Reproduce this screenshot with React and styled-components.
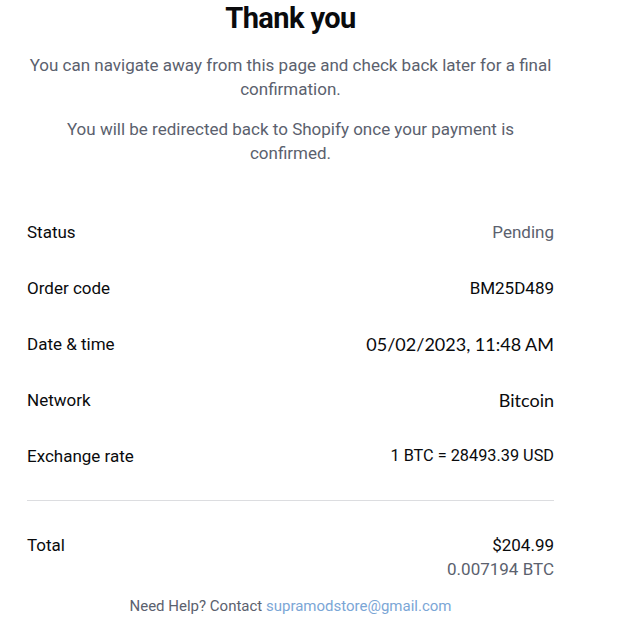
import React from 'react'
import styled, { createGlobalStyle } from 'styled-components'

const GlobalStyle = createGlobalStyle`
    body {
        margin: 0;
        background: #ffffff;
        font-family: Roboto, "Liberation Sans", sans-serif;
        color: #0a0b0d;
    }
`

const Page = styled.div`
    width: 527px;
    margin-left: 27px;
    display: flex;
    flex-direction: column;
`

const Title = styled.h1`
    margin: 0;
    font-size: 29px;
    font-weight: 700;
    line-height: 37px;
    letter-spacing: -0.6px;
    text-align: center;
`

const Note = styled.p`
    margin: ${({ top }) => top}px 0 0;
    font-size: 17px;
    line-height: 24px;
    color: #5b616e;
    text-align: center;
`

const Details = styled.div`
    margin-top: 39px;
    display: flex;
    flex-direction: column;
`

const Row = styled.div`
    display: flex;
    justify-content: space-between;
    align-items: center;
    height: 56px;
`

const Label = styled.span`
    font-size: 17px;
    line-height: 24px;
    color: #0a0b0d;
`

const Value = styled.span`
    font-size: ${({ size }) => size || 17}px;
    line-height: 24px;
    color: ${({ muted }) => muted ? '#5b616e' : '#0a0b0d'};
    font-family: ${({ alt }) => alt ? '"Lato", "Open Sans", sans-serif' : 'inherit'};
`

const Divider = styled.hr`
    margin: 16px 0 0;
    border: none;
    border-top: 1px solid #dcdde0;
`

const TotalRow = styled.div`
    margin-top: 32px;
    display: flex;
    justify-content: space-between;
    align-items: flex-start;
`

const Amounts = styled.div`
    display: flex;
    flex-direction: column;
    align-items: flex-end;
`

const Help = styled.p`
    margin: 16px 0 0;
    text-align: center;
    font-size: 15px;
    color: #5b616e;
`

const Mail = styled.a`
    color: #7ba6d6;
    text-decoration: none;
`

const rows = [
    { label: 'Status', value: 'Pending', muted: true },
    { label: 'Order code', value: 'BM25D489' },
    { label: 'Date & time', value: '05/02/2023, 11:48 AM', alt: true, size: 18 },
    { label: 'Network', value: 'Bitcoin', alt: true, size: 18 },
    { label: 'Exchange rate', value: '1 BTC = 28493.39 USD', size: 16.3 },
]

const App = () => (
    <>
        <GlobalStyle />
        <Page>
            <Title>Thank you</Title>
            <Note top={16}>You can navigate away from this page and check back later for a final confirmation.</Note>
            <Note top={16}>You will be redirected back to Shopify once your payment is confirmed.</Note>
            <Details>
                {rows.map(r => (
                    <Row key={r.label}>
                        <Label>{r.label}</Label>
                        <Value muted={r.muted} alt={r.alt} size={r.size}>{r.value}</Value>
                    </Row>
                ))}
            </Details>
            <Divider />
            <TotalRow>
                <Label>Total</Label>
                <Amounts>
                    <Value>$204.99</Value>
                    <Value muted>0.007194 BTC</Value>
                </Amounts>
            </TotalRow>
            <Help>Need Help? Contact <Mail href="#">supramodstore@gmail.com</Mail></Help>
        </Page>
    </>
)

export default App
